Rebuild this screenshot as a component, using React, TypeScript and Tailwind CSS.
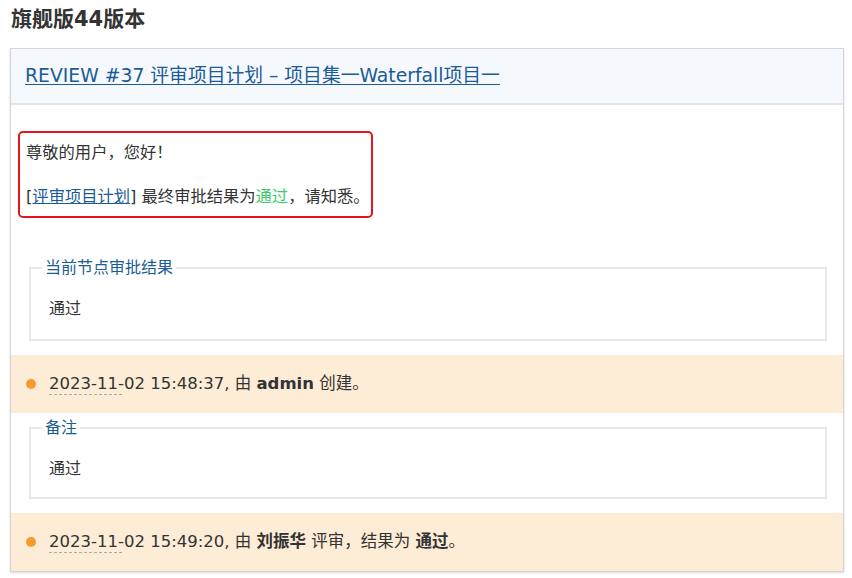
export default function App() {
  const font = { fontFamily: '"DejaVu Sans", "Noto Sans CJK SC", sans-serif' }
  return (
    <div className="min-h-screen bg-white text-[#333]" style={font}>
      <h1 className="pl-[11px] pt-[5px] text-[21px] leading-[28px] font-bold text-[#333]">旗舰版44版本</h1>

      <div className="ml-[10px] mr-[8px] mt-[15px] border border-[#d4d4d4] shadow-[0_1px_2px_rgba(0,0,0,0.15)]">
        <div className="h-[56px] bg-[#f5f9fe] border-b-2 border-[#e6e6e6] flex items-center pl-[14px]">
          <a className="text-[18.8px] text-[#1b5b96] underline underline-offset-2">
            REVIEW #37 评审项目计划 – 项目集一Waterfall项目一
          </a>
        </div>

        <div className="pt-[26px]">
          <div className="ml-[7px] w-[355px] h-[87px] border-2 border-[#e8141c] rounded-[5px] px-[6px] pt-[9px] text-[16.3px] leading-[22px] whitespace-nowrap">
            <p>尊敬的用户，您好！</p>
            <p className="mt-[22px]">
              [<a className="text-[#1b5b96] underline">评审项目计划</a>] 最终审批结果为<span className="text-[#3ccb6c]">通过</span>，请知悉。
            </p>
          </div>

          <fieldset className="mr-[16px] ml-[18px] mt-[39px] h-[84px] border-2 border-[#e8e8e8] px-[11px]">
            <legend className="px-[3px] text-[16px] leading-[22px] text-[#1b5b96]">当前节点审批结果</legend>
            <p className="mt-[18px] pl-[7px] text-[16px]">通过</p>
          </fieldset>

          <div className="mt-[14px] h-[58px] bg-[#fdecd6] flex items-center pl-[15px] text-[16.5px] whitespace-nowrap">
            <span className="w-[10px] h-[10px] rounded-full bg-[#f79b2f] mr-[13px]" />
            <span className="relative">
              2023-11-02
              <span className="absolute left-0 bottom-[1px] w-[73px] border-b border-dashed border-[#aaa]" />
            </span>
            <span>&nbsp;15:48:37, 由 <b>admin</b> 创建。</span>
          </div>

          <fieldset className="mr-[16px] ml-[18px] mt-[4px] h-[82px] border-2 border-[#e8e8e8] px-[11px]">
            <legend className="px-[3px] text-[16px] leading-[22px] text-[#1b5b96]">备注</legend>
            <p className="mt-[18px] pl-[7px] text-[16px]">通过</p>
          </fieldset>

          <div className="mt-[14px] h-[58px] bg-[#fdecd6] flex items-center pl-[15px] text-[16.5px] whitespace-nowrap">
            <span className="w-[10px] h-[10px] rounded-full bg-[#f79b2f] mr-[13px]" />
            <span className="relative">
              2023-11-02
              <span className="absolute left-0 bottom-[1px] w-[73px] border-b border-dashed border-[#aaa]" />
            </span>
            <span>&nbsp;15:49:20, 由 <b>刘振华</b> 评审，结果为 <b>通过</b>。</span>
          </div>
        </div>
      </div>
    </div>
  )
}
